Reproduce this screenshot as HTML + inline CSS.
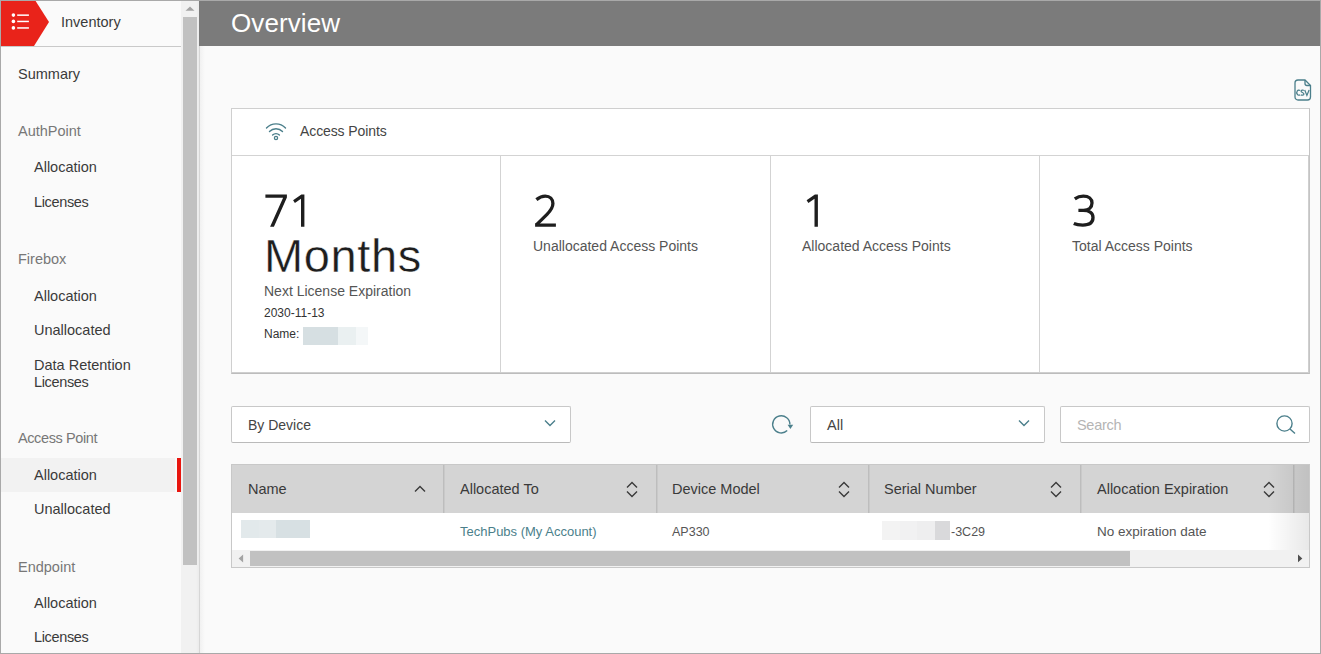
<!DOCTYPE html>
<html><head><meta charset="utf-8">
<style>
*{box-sizing:border-box;margin:0;padding:0}
html,body{width:1321px;height:654px;overflow:hidden;background:#fafafa;font-family:"Liberation Sans",sans-serif;}
.frame{position:absolute;left:0;top:0;width:1321px;height:654px;border:1px solid #a9a9a9;}
.a{position:absolute;white-space:nowrap;line-height:1;}
/* sidebar */
#chev{position:absolute;left:1px;top:1px;}
.sep{position:absolute;left:1px;top:46px;width:180px;height:1px;background:#c9c9c9}
.track{position:absolute;left:181px;top:1px;width:18px;height:652px;background:linear-gradient(to right,#f1f1f1 0,#f1f1f1 15px,#ebebeb 18px)}
.thumb{position:absolute;left:183px;top:17px;width:14px;height:548px;background:#c1c1c1}
.vline{position:absolute;left:199px;top:46px;width:1px;height:607px;background:#d6d6d6}
.vsh{position:absolute;left:200px;top:46px;width:5px;height:607px;background:linear-gradient(to right,#f1f1f1,#fafafa)}
.grp{color:#777;font-size:14.5px}
.itm{color:#3a3a3a;font-size:14.5px}
.sel{position:absolute;left:1px;top:458px;width:174px;height:34px;background:#f2f2f2}
.redbar{position:absolute;left:177px;top:458px;width:4px;height:34px;background:#e8160f}
/* header */
.hdr{position:absolute;left:199px;top:1px;width:1121px;height:45px;background:#7b7b7b}
/* cards */
.card{position:absolute;left:231px;top:108px;width:1079px;height:266px;background:#fff;border:1px solid #cfcfcf;border-right-color:#c4c4c4;border-bottom-color:#bcbcbc}
.inr{position:absolute;left:1076px;top:47px;width:1px;height:217px;background:#cfcfcf}
.inb{position:absolute;left:0;top:263px;width:1077px;height:1px;background:#cfcfcf}
.cardh{position:absolute;left:0;top:0;width:1077px;height:47px;border-bottom:1px solid #d3d3d3}
.big{color:#1e1e1e;font-size:46px;-webkit-text-stroke:0.4px #fff}
.lbl{color:#555;font-size:14px}
.sm{color:#333;font-size:12px}
.box{position:absolute;background:#fff;border:1px solid #c8c8c8;border-bottom-color:#bababa;border-radius:2px}
.th{position:absolute;top:464px;height:49px;background:#d4d4d4}
.vd{position:absolute;top:47px;width:1px;height:217px;background:#d3d3d3}
.tbl{position:absolute;left:231px;top:464px;width:1079px;height:104px;background:#fff;border:1px solid #c8c8c8;overflow:hidden}
.thd{position:absolute;left:0;top:0;width:1077px;height:48px;background:#d4d4d4}
.cd{position:absolute;top:0;width:1px;height:48px;background:#bdbdbd;box-shadow:1px 0 0 #c9c9c9}
.fade{position:absolute;left:1036px;top:0;width:41px;height:85px;background:linear-gradient(to right,rgba(0,0,0,0),rgba(0,0,0,0.09))}
.hs{position:absolute;left:0;top:85px;width:1077px;height:17px;background:#f1f1f1}
.hthumb{position:absolute;left:18px;top:86px;width:880px;height:14.5px;background:#c1c1c1}
.th2{color:#3a3a3a;font-size:14.5px}
.td{color:#555;font-size:13.5px}
.srt{position:absolute;top:481px;width:14px;height:17px}
</style></head><body>
<div class="frame"></div>

<!-- sidebar -->
<svg id="chev" width="50" height="46" viewBox="0 0 50 46">
  <polygon points="0,0 34.6,0 48,21 33,45 0,45" fill="#e9231a"/>
  <circle cx="12.4" cy="14.1" r="1.8" fill="#fff"/>
  <circle cx="12.4" cy="20.4" r="1.8" fill="#fff"/>
  <circle cx="12.4" cy="26.9" r="1.8" fill="#fff"/>
  <rect x="16.2" y="13.4" width="11.7" height="1.5" fill="#fff"/>
  <rect x="16.2" y="19.7" width="11.7" height="1.5" fill="#fff"/>
  <rect x="16.2" y="26.2" width="11.7" height="1.5" fill="#fff"/>
</svg>
<div class="a itm" style="left:61px;top:15px;font-size:14.5px">Inventory</div>
<div class="sep"></div>
<div class="sel"></div>
<div class="redbar"></div>
<div class="track"></div>
<svg style="position:absolute;left:181px;top:1px" width="16" height="16"><polygon points="4.5,9.8 9,5.6 13.5,9.8" fill="#a3a3a3"/></svg>
<div class="thumb"></div>
<div class="vline"></div><div class="vsh"></div>

<div class="a itm" style="left:18px;top:67px">Summary</div>
<div class="a grp" style="left:18px;top:124px">AuthPoint</div>
<div class="a itm" style="left:34px;top:160px">Allocation</div>
<div class="a itm" style="left:34px;top:195px;letter-spacing:-0.35px">Licenses</div>
<div class="a grp" style="left:18px;top:252px">Firebox</div>
<div class="a itm" style="left:34px;top:289px">Allocation</div>
<div class="a itm" style="left:34px;top:323px">Unallocated</div>
<div class="a itm" style="left:34px;top:358px">Data Retention</div>
<div class="a itm" style="left:34px;top:375px;letter-spacing:-0.35px">Licenses</div>
<div class="a grp" style="left:18px;top:431px;letter-spacing:-0.4px">Access Point</div>
<div class="a itm" style="left:34px;top:468px">Allocation</div>
<div class="a itm" style="left:34px;top:502px">Unallocated</div>
<div class="a grp" style="left:18px;top:560px">Endpoint</div>
<div class="a itm" style="left:34px;top:596px">Allocation</div>
<div class="a itm" style="left:34px;top:630px;letter-spacing:-0.35px">Licenses</div>

<!-- header -->
<div class="hdr"></div>
<div class="a" style="left:231px;top:10px;color:#fff;font-size:26px;letter-spacing:0.1px">Overview</div>

<!-- csv icon -->
<svg style="position:absolute;left:1293.5px;top:79px" width="18" height="22" viewBox="0 0 18 22">
  <path d="M4,1 H11 L16.5,6.5 V18 a3,3 0 0 1 -3,3 H4 a3,3 0 0 1 -3,-3 V4 a3,3 0 0 1 3,-3 Z" fill="none" stroke="#4b7f8b" stroke-width="1.3"/>
  <path d="M11,1 V4.5 a2,2 0 0 0 2,2 H16.5" fill="none" stroke="#4b7f8b" stroke-width="1.3"/>
  <g fill="none" stroke="#4b7f8b" stroke-width="1.25">
  <path d="M6.1,11.6 A2.1,2.5 0 1 0 6.1,15.7"/>
  <path d="M9.8,11.5 C9.2,10.9 7.1,10.9 7.1,12.3 C7.1,13.6 9.9,13.4 9.9,14.9 C9.9,16.4 7.6,16.5 6.9,15.8"/>
  <path d="M10.7,10.9 L12.9,16.4 L15.1,10.9"/>
</g>
</svg>

<!-- card -->
<div class="card">
  <div class="cardh"></div>
  <div class="vd" style="left:268px"></div>
  <div class="vd" style="left:538px"></div>
  <div class="vd" style="left:807px"></div>
  <div class="inr"></div><div class="inb"></div>
</div>
<svg style="position:absolute;left:264px;top:121px" width="24" height="21" viewBox="0 0 24 21">
  <path d="M2.5,7 A13,13 0 0 1 21.5,7" fill="none" stroke="#4b7f8b" stroke-width="1.4" stroke-linecap="round"/>
  <path d="M5.5,10.5 A9,9 0 0 1 18.5,10.5" fill="none" stroke="#4b7f8b" stroke-width="1.4" stroke-linecap="round"/>
  <path d="M8.6,14 A5,5 0 0 1 15.4,14" fill="none" stroke="#4b7f8b" stroke-width="1.4" stroke-linecap="round"/>
  <circle cx="12" cy="17" r="1.6" fill="none" stroke="#4b7f8b" stroke-width="1.3"/>
</svg>
<div class="a" style="left:300px;top:124px;color:#444;font-size:14px;letter-spacing:-0.1px">Access Points</div>

<svg style="position:absolute;left:0;top:0" width="320" height="240"><g fill="#1e1e1e">
  <polygon points="265.4,194.4 286.9,194.4 286.9,197.5 273.9,226.7 270.1,226.7 283.1,197.8 265.4,197.8"/>
  <polygon points="301.4,194.4 304.4,194.4 304.4,226.7 301.0,226.7 301.0,198.7 294.9,202.9 293.1,200.3"/>
</g></svg>
<div class="a big" style="left:264px;top:231.5px;letter-spacing:0.6px;font-size:47px">Months</div>
<div class="a lbl" style="left:264px;top:284px">Next License Expiration</div>
<div class="a sm" style="left:264px;top:307px">2030-11-13</div>
<div class="a sm" style="left:264px;top:328px">Name:</div>
<div style="position:absolute;left:303px;top:327px;width:35px;height:18px;background:#d6dfe2"></div>
<div style="position:absolute;left:338px;top:327px;width:18px;height:18px;background:#eaf0f1"></div>
<div style="position:absolute;left:356px;top:327px;width:12px;height:18px;background:#f4f7f8"></div>

<svg style="position:absolute;left:520px;top:185px" width="45" height="50" viewBox="520 185 45 50"><path d="M536.4,199.6 C539.5,197.1 542,196.1 545.2,196.1 C550,196.1 552.9,199.2 552.9,203.6 C552.9,207.8 550.8,210.6 547,214.4 L536.6,224.6" fill="none" stroke="#1e1e1e" stroke-width="3.3"/><polygon points="535.1,223.3 539.4,223.3 540.2,223.4 555.9,223.4 555.9,226.7 535.1,226.7" fill="#1e1e1e"/></svg>
<div class="a lbl" style="left:533px;top:239px">Unallocated Access Points</div>
<svg style="position:absolute;left:800px;top:188px" width="24" height="44"><g fill="#1e1e1e">
  <polygon points="14.9,6.4 17.9,6.4 17.9,38.7 14.5,38.7 14.5,10.7 8.4,14.9 6.6,12.3"/>
</g></svg>
<div class="a lbl" style="left:802px;top:239px">Allocated Access Points</div>
<svg style="position:absolute;left:1060px;top:185px" width="45" height="50" viewBox="1060 185 45 50"><path d="M1074.8,198.8 C1077.3,197 1080.2,196.05 1083.3,196.05 C1088.8,196.05 1092,198.8 1092,203 C1092,207.3 1088.8,210.3 1083.5,210.3 H1078.4 M1083.2,210.3 C1089.5,210.3 1093,213.2 1093,217.5 C1093,222.4 1089.3,225.05 1082.8,225.05 C1079.5,225.05 1076.2,224.6 1073.8,223.5" fill="none" stroke="#1e1e1e" stroke-width="3.3"/></svg>
<div class="a lbl" style="left:1072px;top:239px">Total Access Points</div>

<!-- filters -->
<div class="box" style="left:231px;top:406px;width:340px;height:37px"></div>
<div class="a" style="left:248px;top:417.5px;color:#444;font-size:14px">By Device</div>
<svg style="position:absolute;left:543px;top:418px" width="14" height="10"><path d="M2,2.5 L7,7.5 L12,2.5" fill="none" stroke="#4b7f8b" stroke-width="1.4"/></svg>

<svg style="position:absolute;left:770px;top:414px" width="25" height="22" viewBox="0 0 25 22">
  <path d="M17.2,16.6 A8.6,8.6 0 1 1 19.9,10.6" fill="none" stroke="#4b7f8b" stroke-width="1.4"/>
  <polygon points="17.6,10.7 23.2,10.7 20.4,14.9" fill="#4b7f8b"/>
</svg>
<div class="box" style="left:810px;top:406px;width:235px;height:37px"></div>
<div class="a" style="left:827px;top:417.5px;color:#444;font-size:14.5px">All</div>
<svg style="position:absolute;left:1017px;top:418px" width="14" height="10"><path d="M2,2.5 L7,7.5 L12,2.5" fill="none" stroke="#4b7f8b" stroke-width="1.4"/></svg>

<div class="box" style="left:1060px;top:406px;width:250px;height:37px"></div>
<div class="a" style="left:1077px;top:417.5px;color:#b5b5b5;font-size:14.5px;letter-spacing:-0.3px">Search</div>
<svg style="position:absolute;left:1275px;top:414px" width="22" height="22" viewBox="0 0 22 22">
  <circle cx="9.5" cy="9.5" r="7.6" fill="none" stroke="#4b7f8b" stroke-width="1.4"/>
  <path d="M15,15 L20,19.5" stroke="#4b7f8b" stroke-width="1.4"/>
</svg>

<!-- table -->
<div class="tbl">
  <div class="thd"></div>
  <div class="cd" style="left:211px"></div>
  <div class="cd" style="left:423.5px"></div>
  <div class="cd" style="left:635.5px"></div>
  <div class="cd" style="left:848px"></div>
  <div class="cd" style="left:1060.5px"></div>
  <div class="fade"></div>
  <div class="hs"></div>
  <div class="hthumb"></div>
  <svg style="position:absolute;left:5px;top:87px" width="12" height="12"><polygon points="1.6,6.4 6.1,2.4 6.1,10.4" fill="#a3a3a3"/></svg>
  <svg style="position:absolute;left:1063px;top:88px" width="12" height="12"><polygon points="3,1.6 3,9.3 7.3,5.45" fill="#505050"/></svg>
</div>
<div class="a th2" style="left:248px;top:481.5px">Name</div>
<svg style="position:absolute;left:413px;top:484px" width="14" height="10"><path d="M2,7.5 L7,2.5 L12,7.5" fill="none" stroke="#3a3a3a" stroke-width="1.4"/></svg>
<div class="a th2" style="left:460px;top:481.5px">Allocated To</div>
<div class="a th2" style="left:672px;top:481.5px">Device Model</div>
<div class="a th2" style="left:884px;top:481.5px">Serial Number</div>
<div class="a th2" style="left:1097px;top:481.5px">Allocation Expiration</div>
<svg class="srt" style="left:625px"><path d="M2,6.5 L7,1.5 L12,6.5 M2,10.5 L7,15.5 L12,10.5" fill="none" stroke="#3a3a3a" stroke-width="1.4"/></svg>
<svg class="srt" style="left:837px"><path d="M2,6.5 L7,1.5 L12,6.5 M2,10.5 L7,15.5 L12,10.5" fill="none" stroke="#3a3a3a" stroke-width="1.4"/></svg>
<svg class="srt" style="left:1049px"><path d="M2,6.5 L7,1.5 L12,6.5 M2,10.5 L7,15.5 L12,10.5" fill="none" stroke="#3a3a3a" stroke-width="1.4"/></svg>
<svg class="srt" style="left:1262px"><path d="M2,6.5 L7,1.5 L12,6.5 M2,10.5 L7,15.5 L12,10.5" fill="none" stroke="#3a3a3a" stroke-width="1.4"/></svg>

<div style="position:absolute;left:241px;top:520px;width:18px;height:18px;background:#e2e9eb"></div>
<div style="position:absolute;left:259px;top:520px;width:17px;height:18px;background:#e4eaec"></div>
<div style="position:absolute;left:276px;top:520px;width:34px;height:18px;background:#d7e0e3"></div>
<div class="a td" style="left:460px;top:525px;color:#4b7f8b;font-size:13px">TechPubs (My Account)</div>
<div class="a td" style="left:672px;top:526px;font-size:12.5px">AP330</div>
<div style="position:absolute;left:882px;top:521px;width:18px;height:19px;background:#f3f3f3"></div>
<div style="position:absolute;left:900px;top:521px;width:17px;height:19px;background:#f1f1f2"></div>
<div style="position:absolute;left:917px;top:521px;width:18px;height:19px;background:#eeeeef"></div>
<div style="position:absolute;left:935px;top:521px;width:15px;height:19px;background:#d9d9db"></div>
<div class="a td" style="left:951px;top:526px;font-size:12.5px">-3C29</div>
<div class="a td" style="left:1097px;top:525px">No expiration date</div>
</body></html>
